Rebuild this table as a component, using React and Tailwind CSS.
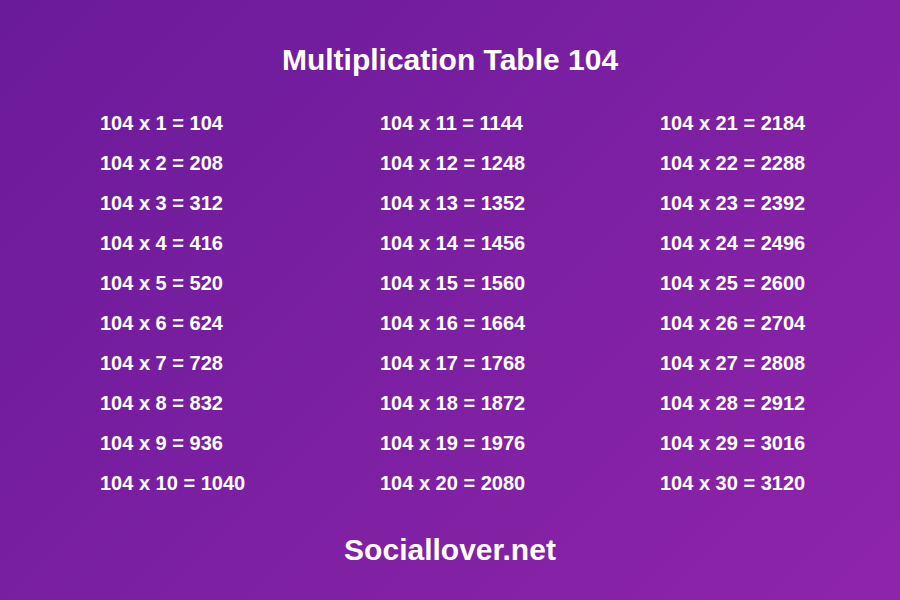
import React from "react";

export default function App() {
  const cols = [0, 1, 2].map((c) =>
    Array.from({ length: 10 }, (_, i) => c * 10 + i + 1)
  );
  return (
    <div
      className="w-[900px] h-[600px] bg-[linear-gradient(135deg,#6a1b9a,#8e24aa)] text-white flex flex-col"
      style={{ fontFamily: '"Liberation Sans", Arial, sans-serif' }}
    >
      <h1 className="text-[30px] font-bold text-center leading-[32px] mt-[44px]">
        Multiplication Table 104
      </h1>
      <div className="grid grid-cols-[280px_280px_240px] pl-[100px] mt-[27px]">
        {cols.map((col, ci) => (
          <div key={ci} className="flex flex-col">
            {col.map((n) => (
              <div key={n} className="text-[20px] font-bold leading-[40px] h-[40px]">
                104 x {n} = {104 * n}
              </div>
            ))}
          </div>
        ))}
      </div>
      <div className="text-[30px] font-bold text-center leading-[32px] mt-[31px]">
        Sociallover.net
      </div>
    </div>
  );
}
